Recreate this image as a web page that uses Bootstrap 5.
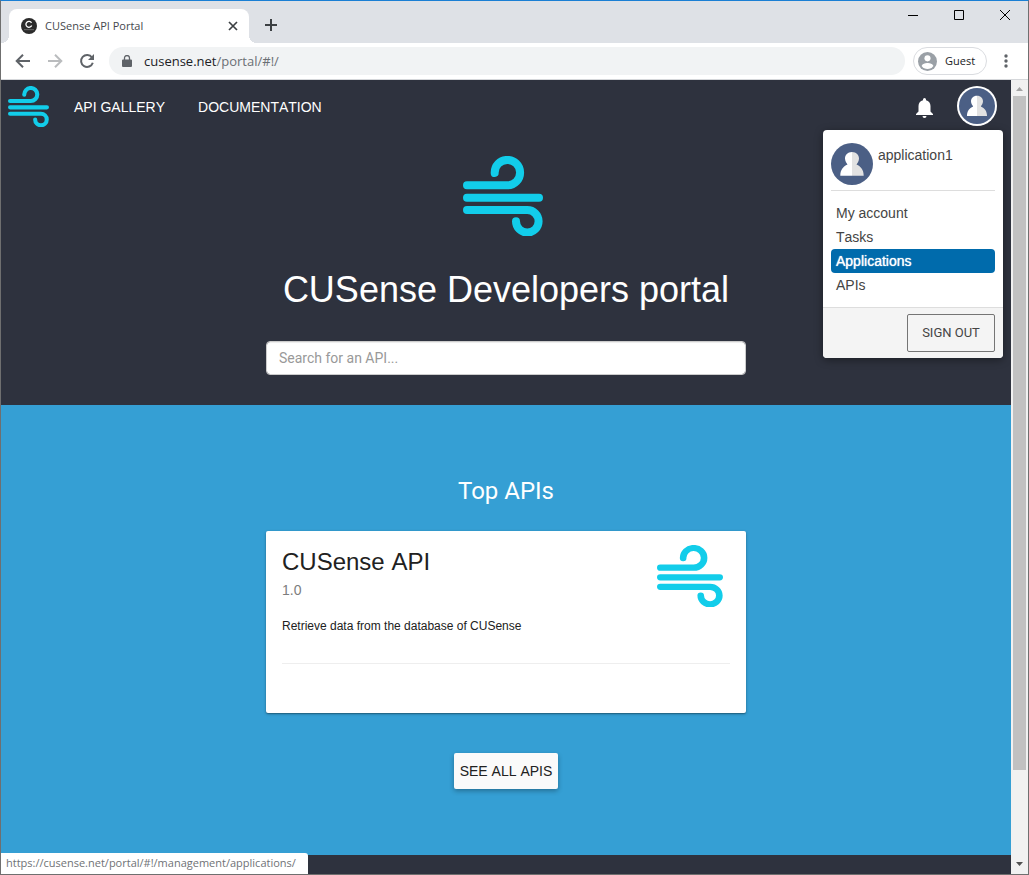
<!DOCTYPE html>
<html lang="en">
<head>
<meta charset="utf-8">
<meta name="viewport" content="width=device-width, initial-scale=1">
<title>CUSense API Portal</title>
<link href="https://cdn.jsdelivr.net/npm/bootstrap@5.3.0/dist/css/bootstrap.min.css" rel="stylesheet">
<script src="https://cdn.jsdelivr.net/npm/bootstrap@5.3.0/dist/js/bootstrap.bundle.min.js" defer></script>
<style>
  :root { --ink: #2e323e; --sky: #359fd4; --segoe: "Open Sans", "Noto Sans", sans-serif; }
  body { font: 14px/20px "Liberation Sans", Arial, sans-serif; font-kerning: none; color: #212121; }
  a { color: inherit; text-decoration: none; }
  svg { display: block; flex: none; }
  button { font: inherit; }
  .plain-btn { border: 0; background: none; padding: 0; color: #5f6368; }
  .window-frame { min-height: 100vh; border: 1px solid #6f6f6f; border-top-color: #1a7fd4; }

  /* browser chrome */
  .tab-strip { height: 42px; background: #dee1e6; padding-left: 8px; font-family: var(--segoe); font-size: 11px; }
  .tab-item { position: relative; width: 240px; height: 34px; background: #fff; border-radius: 8px 8px 0 0; padding: 0 10px 0 12px; color: #45494d; }
  .tab-item::before, .tab-item::after { content: ""; position: absolute; bottom: 0; width: 8px; height: 8px; }
  .tab-item::before { right: 100%; background: radial-gradient(circle at 0 0, #dee1e6 8px, #fff 8px); }
  .tab-item::after { left: 100%; background: radial-gradient(circle at 100% 0, #dee1e6 8px, #fff 8px); }
  .win-btn { width: 46px; height: 28px; color: #000; }
  .tool-bar { height: 37px; background: #fff; border-bottom: 1px solid #d5d7da; font-family: var(--segoe); font-size: 13px; padding: 0 19px 0 14px; }
  .tool-icons { gap: 16px; margin-right: 14px; }
  .address { height: 28px; border-radius: 14px; background: #f1f3f4; padding: 0 13px; color: #202124; margin-right: 8px; }
  .address-path { color: #6b6f74; }
  .guest { height: 28px; width: 74px; border: 1px solid #dadce0; border-radius: 14px; font-size: 11px; color: #202124; padding-left: 4px; }

  /* portal */
  .portal { background: var(--ink); }
  .top-nav { height: 54px; padding: 0 14px 2px 7px; color: #fff; }
  .nav-links { gap: 33px; margin: 2px 0 0 25px; }
  .avatar-btn { border-radius: 50%; }
  .hero { padding: 22px 0 30px; color: #fff; }
  .hero h1 { font-size: 36px; line-height: 40px; margin: 34px 0 31px; }
  .hero-logo { margin-right: 6px; }
  .center-col { width: 480px; max-width: 100%; }
  .search { height: 34px; border: 1px solid #ccc; border-radius: 4px; padding: 6px 12px; font-family: Roboto, sans-serif; font-size: 14px; box-shadow: inset 0 1px 1px rgba(0,0,0,.075); }
  .search::placeholder { color: #999; }
  .top-apis { background: var(--sky); height: 450px; padding-top: 70px; }
  .top-apis h2 { font: 24px/32px Roboto, sans-serif; color: #fff; margin-bottom: 24px; }
  .api-card { height: 182px; border: 0; border-radius: 2px; padding: 14px 16px 49px; box-shadow: 0 1px 3px rgba(0,0,0,.3), 0 1px 1px rgba(0,0,0,.2); }
  .api-body { border-bottom: 1px solid #eee; }
  .api-logo { margin-right: 7px; }
  .api-card h3 { font-size: 24px; line-height: 34px; margin: 0; color: #212121; }
  .api-card p { font-size: 12px; margin: 0; }
  .version { color: #7d7d7d; margin: 1px 0 16px; }
  .see-all { margin-top: 40px; height: 36px; background: #fafafa; border: 0; border-radius: 2px; padding: 0 6px; color: #212121; box-shadow: 0 2px 5px rgba(0,0,0,.3); }

  /* account menu */
  .account-menu { position: absolute; top: 50px; right: 8px; width: 180px; background: #fff; border-radius: 4px; color: #444; box-shadow: 0 2px 8px rgba(0,0,0,.4); overflow: hidden; }
  .account-head { margin: 0 8px; padding: 13px 0 5px; gap: 5px; border-bottom: 1px solid #ddd; line-height: 24px; }
  .account-list { padding: 10px 8px; }
  .account-list a { display: block; line-height: 24px; padding: 0 5px; border-radius: 4px; }
  .account-list a.chosen { background: #006bac; color: #fff; text-shadow: 0 0 1px #fff; }
  .account-foot { background: #f4f4f4; border-top: 1px solid #ddd; padding: 6px 8px; }
  .sign-out { width: 88px; height: 38px; border: 1px solid #757575; border-radius: 2px; background: none; color: #444; font: 13px/20px Roboto, sans-serif; }

  /* scroll bar and status line */
  .scroll-col { width: 17px; background: #f1f1f1; padding: 7px 1px 7px 0; }
  .scroll-thumb { width: 13px; height: 86.4%; background: #c1c1c1; margin-top: 4px; }
  .status-line { position: fixed; left: 1px; bottom: 1px; height: 21px; background: #fff; border-radius: 0 3px 0 0; padding: 0 12px 0 5px; font-family: var(--segoe); font-size: 11px; color: #6f7276; }
</style>
</head>
<body>
<svg width="0" height="0" class="position-absolute" aria-hidden="true">
  <symbol id="wind" viewBox="0 0 80 80" preserveAspectRatio="none">
    <path d="M4 29.3H44.5A12.7 12.7 0 1 0 31.7 17M4 41.7H76M4 54H64.3A11.3 11.3 0 1 1 53 65.3" fill="none" stroke="#12cdea" stroke-width="8" stroke-linecap="round"/>
  </symbol>
  <symbol id="person" viewBox="0 0 42 42">
    <circle cx="21" cy="21" r="21" fill="#4b5f85"/>
    <path d="M21 9C16.500 9 14 12 14 15.500C14 18.200 15.500 20 16.500 21.500C12 23.500 9.300 27 9.300 32.700H21Z" fill="#fff"/>
    <path d="M21 9C25.500 9 28 12 28 15.500C28 18.200 26.500 20 25.500 21.500C30 23.500 32.700 27 32.700 32.700H21Z" fill="#e2e2e2"/>
  </symbol>
</svg>

<div class="window-frame d-flex flex-column">
  <header>
    <div class="tab-strip d-flex align-items-end">
      <div class="tab-item d-flex align-items-center">
        <svg width="16" height="16" viewBox="0 0 16 16"><circle cx="8" cy="8" r="8" fill="#2b2b2b"/><path d="M10.500 4.800A3 3 0 1 0 10.700 7.500" fill="none" stroke="#fff" stroke-width="1.300"/><path d="M3 11.700H13" stroke="#777" stroke-width=".8"/></svg>
        <span class="ms-2 flex-grow-1">CUSense API Portal</span>
        <button class="plain-btn" aria-label="Close tab"><svg width="12" height="12" viewBox="0 0 12 12"><path d="M2 2L10 10M10 2L2 10" stroke="#3c4043" stroke-width="1.700"/></svg></button>
      </div>
      <button class="plain-btn ms-3 mb-2 pb-1" aria-label="New tab"><svg width="12" height="12" viewBox="0 0 12 12"><path d="M6 0V12M0 6H12" stroke="#3c4043" stroke-width="2"/></svg></button>
      <div class="ms-auto d-flex align-self-start">
        <button class="plain-btn win-btn" aria-label="Minimize"><svg class="m-auto" width="10" height="10"><path d="M0 5.500H10" stroke="#000"/></svg></button>
        <button class="plain-btn win-btn" aria-label="Maximize"><svg class="m-auto" width="10" height="10"><path d="M.5.5H9.500V9.500H.5Z" fill="none" stroke="#000"/></svg></button>
        <button class="plain-btn win-btn" aria-label="Close"><svg class="m-auto" width="10" height="10"><path d="M0 0L10 10M10 0L0 10" stroke="#000"/></svg></button>
      </div>
    </div>
    <div class="tool-bar d-flex align-items-center">
      <div class="tool-icons d-flex">
        <button class="plain-btn" aria-label="Back"><svg width="16" height="16" viewBox="0 0 16 16"><path d="M15 8H2M8 1.700L1.700 8L8 14.300" fill="none" stroke="#5f6368" stroke-width="2"/></svg></button>
        <button class="plain-btn" aria-label="Forward"><svg width="16" height="16" viewBox="0 0 16 16"><path d="M1 8H14M8 1.700L14.300 8L8 14.300" fill="none" stroke="#babcbe" stroke-width="2"/></svg></button>
        <button class="plain-btn" aria-label="Reload"><svg width="16" height="16" viewBox="0 0 16 16"><path d="M13 4.500A6 6 0 1 0 13.800 9.800" fill="none" stroke="#5f6368" stroke-width="2"/><path d="M15 1V7H9Z" fill="#5f6368"/></svg></button>
      </div>
      <div class="address d-flex align-items-center flex-grow-1">
        <svg width="10" height="12" viewBox="0 0 10 12"><path d="M1 4.500H9A1 1 0 0 1 10 5.500V11A1 1 0 0 1 9 12H1A1 1 0 0 1 0 11V5.500A1 1 0 0 1 1 4.500Z" fill="#5f6368"/><path d="M2.500 5V3A2.500 2.500 0 0 1 7.500 3V5" fill="none" stroke="#5f6368" stroke-width="1.300"/></svg>
        <a href="#" class="ms-2 ps-1">cusense.net<span class="address-path">/portal/#!/</span></a>
      </div>
      <button class="plain-btn guest d-flex align-items-center">
        <svg width="19" height="19" viewBox="0 0 20 20"><circle cx="10" cy="10" r="10" fill="#9aa0a6"/><circle cx="10" cy="6.700" r="3.200" fill="#fff"/><path d="M3.800 14.700C4.500 12.300 8 11.500 10 11.500S15.500 12.300 16.200 14.700A7.600 7.600 0 0 1 3.800 14.700Z" fill="#fff"/></svg>
        <span class="ms-2">Guest</span>
      </button>
      <button class="plain-btn ms-3" aria-label="Browser menu"><svg width="6" height="14" viewBox="0 0 6 14"><g fill="#5f6368"><circle cx="3" cy="2" r="1.700"/><circle cx="3" cy="7" r="1.700"/><circle cx="3" cy="12" r="1.700"/></g></svg></button>
    </div>
  </header>

  <div class="d-flex flex-grow-1">
    <div class="portal position-relative flex-grow-1">
      <nav class="top-nav d-flex align-items-center">
        <a href="#" aria-label="Home"><svg width="41" height="41"><use href="#wind"/></svg></a>
        <div class="nav-links d-flex">
          <a href="#">API GALLERY</a>
          <a href="#">DOCUMENTATION</a>
        </div>
        <button class="plain-btn ms-auto pt-1" aria-label="Notifications"><svg width="17" height="20" viewBox="0 0 17 20"><path d="M8.500 0A1.500 1.500 0 0 1 10 1.500V2.200C12.800 2.900 14.500 5.200 14.500 8V13.500L17 16V17H0V16L2.500 13.500V8C2.500 5.200 4.200 2.900 7 2.200V1.500A1.500 1.500 0 0 1 8.500 0ZM6.500 18H10.500A2 2 0 0 1 6.500 18Z" fill="#fff"/></svg></button>
        <button class="plain-btn avatar-btn ms-4" aria-label="Account"><svg width="40" height="40" viewBox="0 0 40 40"><circle cx="20" cy="20" r="20" fill="#fff"/><use href="#person" x="2" y="2" width="36" height="36"/></svg></button>
      </nav>

      <section class="hero d-flex flex-column align-items-center">
        <svg class="hero-logo" width="80" height="80"><use href="#wind"/></svg>
        <h1 class="fw-normal">CUSense Developers portal</h1>
        <input type="search" class="form-control search center-col" placeholder="Search for an API..." aria-label="Search for an API">
      </section>

      <section class="top-apis d-flex flex-column align-items-center">
        <h2>Top APIs</h2>
        <article class="card api-card center-col">
          <div class="api-body d-flex justify-content-between flex-grow-1">
            <div>
              <h3 class="fw-normal">CUSense API</h3>
              <div class="version">1.0</div>
              <p>Retrieve data from the database of CUSense</p>
            </div>
            <svg class="api-logo" width="66" height="62"><use href="#wind"/></svg>
          </div>
        </article>
        <button class="see-all">SEE ALL APIS</button>
      </section>

      <div class="account-menu">
        <div class="account-head d-flex">
          <svg width="42" height="42"><use href="#person"/></svg>
          <span>application1</span>
        </div>
        <div class="account-list">
          <a href="#">My account</a>
          <a href="#">Tasks</a>
          <a href="#" class="chosen">Applications</a>
          <a href="#">APIs</a>
        </div>
        <div class="account-foot d-flex justify-content-end">
          <button class="sign-out">SIGN OUT</button>
        </div>
      </div>
    </div>
    <div class="scroll-col d-flex flex-column align-items-center" aria-hidden="true">
      <svg width="7" height="5"><path d="M3.500 0L7 4H0Z" fill="#a3a3a3"/></svg>
      <div class="scroll-thumb"></div>
      <svg class="mt-auto" width="7" height="5"><path d="M0 0H7L3.500 4Z" fill="#505050"/></svg>
    </div>
  </div>
</div>
<div class="status-line">https://cusense.net/portal/#!/management/applications/</div>
</body>
</html>
